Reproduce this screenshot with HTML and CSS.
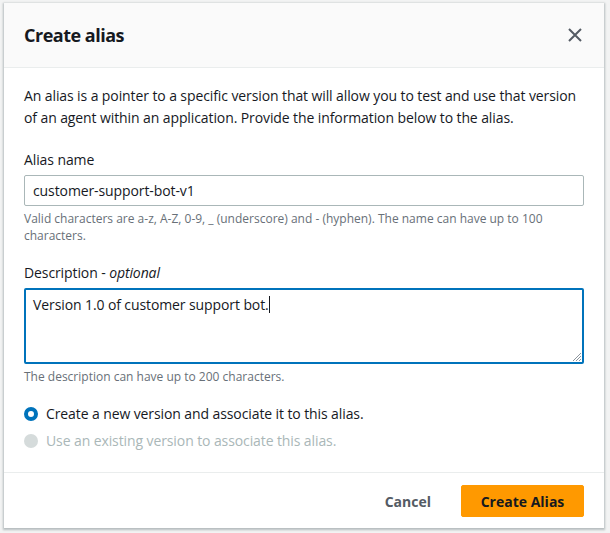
FILE: index.html
```html
<!DOCTYPE html>
<html>
<head>
<meta charset="utf-8">
<link rel="stylesheet" href="styles.css">
</head>
<body>
<div class="backdrop">
  <div class="modal">
    <div class="modal-header">
      <h2 class="title">Create alias</h2>
      <svg class="close" width="16" height="16" viewBox="0 0 16 16"><path d="M2 2 L14 14 M14 2 L2 14" stroke="#545b64" stroke-width="2" fill="none"/></svg>
    </div>
    <div class="modal-body">
      <p class="intro">An alias is a pointer to a specific version that will allow you to test and use that version of an agent within an application. Provide the information below to the alias.</p>
      <div class="field">
        <div class="label">Alias name</div>
        <div class="input">customer-support-bot-v1</div>
        <div class="hint">Valid characters are a-z, A-Z, 0-9, _ (underscore) and - (hyphen). The name can have up to 100 characters.</div>
      </div>
      <div class="field">
        <div class="label">Description - <i>optional</i></div>
        <div class="textarea"><span>Version 1.0 of customer support bot.</span><span class="caret"></span>
          <svg class="grip" width="12" height="12" viewBox="0 0 12 12"><path d="M11 3 L3 11 M11 6 L6 11 M11 9 L9 11" stroke="#8d969e" stroke-width="1"/></svg>
        </div>
        <div class="hint">The description can have up to 200 characters.</div>
      </div>
      <div class="radios">
        <div class="radio"><span class="dot on"></span><span>Create a new version and associate it to this alias.</span></div>
        <div class="radio disabled"><span class="dot off"></span><span>Use an existing version to associate this alias.</span></div>
      </div>
    </div>
    <div class="modal-footer">
      <button class="btn-link">Cancel</button>
      <button class="btn-primary">Create Alias</button>
    </div>
  </div>
</div>
</body>
</html>
```
FILE: styles.css
```css
html, body {
  margin: 0;
  padding: 0;
}
body {
  background: #f2f3f3;
  font-family: "Open Sans", "Noto Sans", Arial, sans-serif;
  color: #16191f;
  width: 610px;
  height: 533px;
  overflow: hidden;
}
.backdrop {
  padding: 3px 6px 0 4px;
}
.modal {
  background: #fff;
  width: 600px;
  box-shadow: 0 1px 2px 1px rgba(0, 28, 36, 0.25);
}
.modal-header {
  background: #fafafa;
  height: 64px;
  border-bottom: 1px solid #eaeded;
  display: flex;
  align-items: center;
  justify-content: space-between;
  padding: 0 21px 0 20px;
}
.title {
  margin: 0;
  font-size: 18px;
  font-weight: 700;
  letter-spacing: -0.5px;
}
.close {
  display: block;
}
.modal-body {
  padding: 17px 20px 20px 20px;
}
.intro {
  margin: 0 0 20px 0;
  max-width: 556px;
  font-size: 14px;
  line-height: 22px;
  letter-spacing: -0.1px;
}
.field {
  margin-bottom: 18px;
}
.label {
  font-size: 14px;
  line-height: 22px;
  margin-bottom: 4px;
  letter-spacing: -0.1px;
}
.input {
  border: 1px solid #aab7b8;
  border-radius: 2px;
  height: 31px;
  box-sizing: border-box;
  padding: 0 8px;
  font-size: 14px;
  line-height: 29px;
  letter-spacing: -0.1px;
}
.hint {
  font-size: 12px;
  line-height: 17px;
  color: #687078;
  margin-top: 4px;
  letter-spacing: 0;
}
.textarea {
  position: relative;
  border: 2px solid #0073bb;
  border-radius: 2px;
  height: 76px;
  box-sizing: border-box;
  padding: 4px 7px;
  font-size: 14px;
  line-height: 22px;
  letter-spacing: -0.1px;
}
.caret {
  display: inline-block;
  width: 1px;
  height: 17px;
  background: #16191f;
  vertical-align: -3px;
}
.grip {
  position: absolute;
  right: 0;
  bottom: 0;
}
.radios {
  display: flex;
  flex-direction: column;
  gap: 5px;
  margin-top: 1px;
}
.radio {
  display: flex;
  align-items: center;
  gap: 8px;
  font-size: 14px;
  line-height: 22px;
  letter-spacing: -0.1px;
}
.radio.disabled {
  color: #aab7b8;
}
.dot {
  width: 14px;
  height: 14px;
  border-radius: 50%;
  box-sizing: border-box;
  flex: none;
}
.dot.on {
  border: 4px solid #0073bb;
  background: #fff;
}
.dot.off {
  background: #d5dbdb;
}
.modal-footer {
  border-top: 1px solid #eaeded;
  display: flex;
  justify-content: flex-end;
  align-items: center;
  gap: 10px;
  padding: 12px 20px 11px 20px;
}
button {
  font-family: inherit;
  font-size: 14px;
  font-weight: 700;
  border-radius: 2px;
  height: 32px;
  cursor: pointer;
}
.btn-link {
  background: none;
  border: none;
  color: #545b64;
  padding: 0 20px;
}
.btn-primary {
  background: #ff9900;
  border: 1px solid #ff9900;
  color: #16191f;
  width: 123px;
}
```
